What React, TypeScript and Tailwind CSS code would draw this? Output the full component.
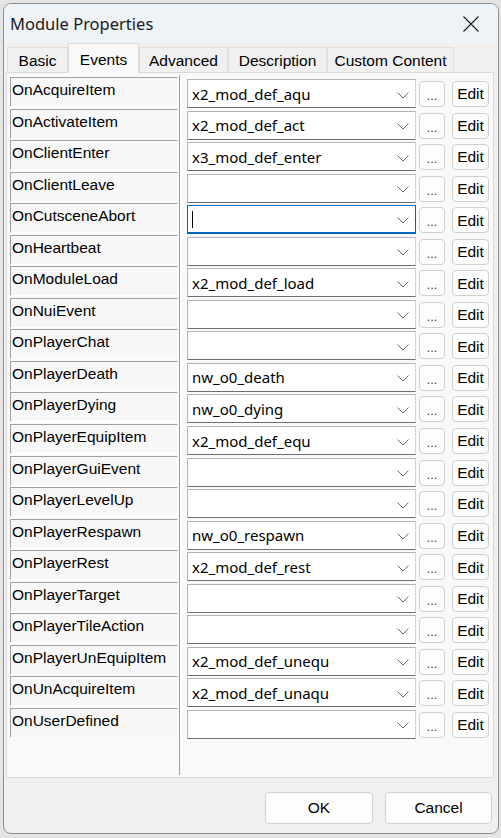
import React from "react";

const rows: [string, string][] = [
  ["OnAcquireItem", "x2_mod_def_aqu"],
  ["OnActivateItem", "x2_mod_def_act"],
  ["OnClientEnter", "x3_mod_def_enter"],
  ["OnClientLeave", ""],
  ["OnCutsceneAbort", ""],
  ["OnHeartbeat", ""],
  ["OnModuleLoad", "x2_mod_def_load"],
  ["OnNuiEvent", ""],
  ["OnPlayerChat", ""],
  ["OnPlayerDeath", "nw_o0_death"],
  ["OnPlayerDying", "nw_o0_dying"],
  ["OnPlayerEquipItem", "x2_mod_def_equ"],
  ["OnPlayerGuiEvent", ""],
  ["OnPlayerLevelUp", ""],
  ["OnPlayerRespawn", "nw_o0_respawn"],
  ["OnPlayerRest", "x2_mod_def_rest"],
  ["OnPlayerTarget", ""],
  ["OnPlayerTileAction", ""],
  ["OnPlayerUnEquipItem", "x2_mod_def_unequ"],
  ["OnUnAcquireItem", "x2_mod_def_unaqu"],
  ["OnUserDefined", ""],
];

const tabs = [
  { name: "Basic", w: "w-[61px]" },
  { name: "Events", w: "w-[71px]" },
  { name: "Advanced", w: "w-[89px]" },
  { name: "Description", w: "w-[99px]" },
  { name: "Custom Content", w: "w-[127px]" },
];

function Chevron() {
  return (
    <svg width="12" height="7" viewBox="0 0 12 7">
      <path d="M0.5 0.5 L6 6 L11.5 0.5" stroke="#6b6b6b" fill="none" strokeWidth="1" />
    </svg>
  );
}

export default function App() {
  const sans = { fontFamily: '"Liberation Sans", Arial, sans-serif' };
  const ui = { fontFamily: '"Noto Sans", "Open Sans", sans-serif' };
  return (
    <div className="w-[501px] h-[838px] bg-[#e4e4e4] pt-[3px] pl-[3px] overflow-hidden">
      <div className="w-[496px] h-[831px] rounded-[8px] border border-[#8f8f8f] bg-[#f0f0f0] overflow-hidden flex flex-col">
        {/* Title bar */}
        <div className="h-[39px] shrink-0 bg-[#eef3f8] flex items-center justify-between pl-[6px] pr-[19px]">
          <span className="text-[16.5px] text-[#1a1a1a] leading-none pt-[1px]" style={ui}>
            Module Properties
          </span>
          <svg width="16" height="16" viewBox="0 0 16 16">
            <path d="M0.5 0.5 L15.5 15.5 M15.5 0.5 L0.5 15.5" stroke="#1a1a1a" strokeWidth="1.1" />
          </svg>
        </div>
        {/* Tabs */}
        <div className="h-[29px] shrink-0 flex items-end pl-[3px]" style={sans}>
          {tabs.map((t) =>
            t.name === "Events" ? (
              <div
                key={t.name}
                className={`${t.w} h-[30px] -mb-[1px] relative z-10 bg-[#f9f9f9] border border-b-0 border-[#dadada] flex items-start justify-center pt-[4px] text-[15.5px] text-black`}
              >
                {t.name}
              </div>
            ) : (
              <div
                key={t.name}
                className={`${t.w} h-[25px] bg-[#f0f0f0] border border-b-0 border-[#e0e0e0] flex items-center justify-center pt-[1px] text-[15.5px] text-black`}
              >
                {t.name}
              </div>
            )
          )}
        </div>
        {/* Panel */}
        <div className="h-[706px] shrink-0 ml-[2px] mr-[4px] bg-[#f9f9f9] border border-[#dadada] flex pt-[2px] pb-[2px]">
          <div className="w-[171px] pl-[3px] pt-[2px] flex flex-col">
            {rows.map(([label]) => (
              <div key={label} className="h-[31.55px] shrink-0">
                <div
                  className="h-[30px] w-[168px] border-t border-l border-[#a0a0a0] border-r border-b border-r-white border-b-white bg-[#f7f7f7] pl-[1px] pt-[3px] text-[15.5px] leading-[18px] text-black"
                  style={sans}
                >
                  {label}
                </div>
              </div>
            ))}
          </div>
          <div className="w-[3px] self-stretch border-l border-l-[#a0a0a0] border-r border-r-white ml-[1px]" />
          <div className="pl-[5px] pt-[3px] flex flex-col">
            {rows.map(([label, value], i) => {
              const focused = i === 4;
              return (
                <div key={label} className="h-[31.55px] shrink-0 flex items-start">
                  <div
                    className={
                      focused
                        ? "mt-[1px] h-[29px] w-[229px] bg-white border border-[#0067c0] border-b-2 flex items-center justify-between pl-[4px] pr-[6px]"
                        : "mt-[1px] h-[29px] w-[229px] bg-white border border-[#b4b4b4] border-r-[#d4d4d4] border-b-[#6e6e6e] flex items-center justify-between pl-[4px] pr-[6px]"
                    }
                  >
                    <span className="text-[15px] text-black leading-none pt-[1px]" style={ui}>
                      {focused ? <span className="inline-block w-[1px] h-[17px] bg-black align-middle" /> : value}
                    </span>
                    <span className="pt-[3px]">
                      <Chevron />
                    </span>
                  </div>
                  <div className="ml-[3px] mt-[3px] w-[26px] h-[26px] rounded-[4px] border border-[#d0d0d0] bg-[#fdfdfd] flex items-end justify-center pb-[4px] text-[13px] leading-none text-[#444]" style={sans}>
                    ...
                  </div>
                  <div className="ml-[7px] mt-[3px] w-[37px] h-[26px] rounded-[4px] border border-[#d0d0d0] bg-[#fdfdfd] flex items-center justify-center text-[15.5px] text-black" style={sans}>
                    Edit
                  </div>
                </div>
              );
            })}
          </div>
        </div>
        {/* Bottom buttons */}
        <div className="flex justify-end gap-[12px] pr-[6px] pt-[14px]" style={sans}>
          <div className="w-[108px] h-[32px] rounded-[4px] border border-[#d0d0d0] bg-[#fdfdfd] flex items-center justify-center text-[15.5px] text-black">
            OK
          </div>
          <div className="w-[107px] h-[32px] rounded-[4px] border border-[#d0d0d0] bg-[#fdfdfd] flex items-center justify-center text-[15.5px] text-black">
            Cancel
          </div>
        </div>
      </div>
    </div>
  );
}
